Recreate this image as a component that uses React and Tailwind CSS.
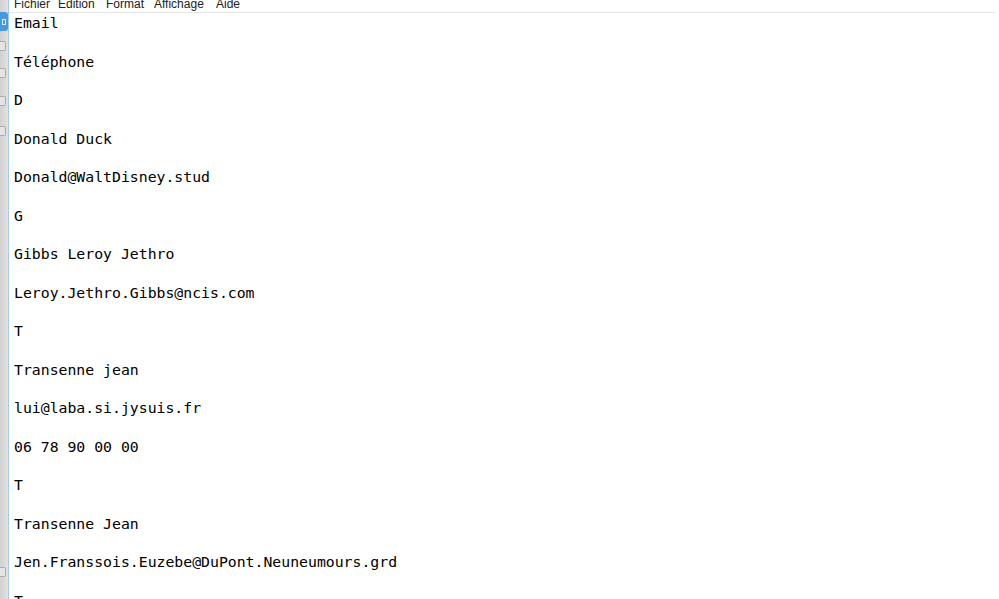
import React from "react";

const lines = [
  "Email",
  "Téléphone",
  "D",
  "Donald Duck",
  "Donald@WaltDisney.stud",
  "G",
  "Gibbs Leroy Jethro",
  "Leroy.Jethro.Gibbs@ncis.com",
  "T",
  "Transenne jean",
  "lui@laba.si.jysuis.fr",
  "06 78 90 00 00",
  "T",
  "Transenne Jean",
  "Jen.Franssois.Euzebe@DuPont.Neuneumours.grd",
  "T",
];

function SideIcon() {
  return (
    <div className="w-[6px] h-[10px] rounded-r-[2px] border border-l-0 border-[#ababab] bg-[#e4e4e4]" />
  );
}

export default function App() {
  return (
    <div className="w-[999px] h-[599px] overflow-hidden flex bg-white">
      <div className="w-[8px] h-full bg-gradient-to-r from-[#d0d0d0] to-[#e2e2e2] flex flex-col items-start">
        <div className="mt-[12px] w-[8px] h-[19px] rounded-r-[3px] bg-[#4b97dc] flex items-center justify-center">
          <div className="w-[4px] h-[6px] border border-white/80" />
        </div>
        <div className="mt-[10px]"><SideIcon /></div>
        <div className="mt-[17px]"><SideIcon /></div>
        <div className="mt-[18px]"><SideIcon /></div>
        <div className="mt-[20px]"><SideIcon /></div>
        <div className="mt-auto mb-[22px]"><SideIcon /></div>
      </div>
      <div className="w-px h-full bg-[#a7c9ea]" />
      <div className="flex-1 flex flex-col min-w-0">
        <div className="h-[13px] border-b border-[#e6e6e6] overflow-hidden shrink-0 mr-[3px]">
          <div
            className="mt-[-3px] pl-[5px] flex text-[12px] leading-[normal] text-[#222222]"
            style={{ fontFamily: '"Liberation Sans", Arial, sans-serif' }}
          >
            <span className="w-[44px]">Fichier</span>
            <span className="w-[48px]">Edition</span>
            <span className="w-[48px]">Format</span>
            <span className="w-[62px]">Affichage</span>
            <span>Aide</span>
          </div>
        </div>
        <div
          className="pl-[5px] text-[14.8px] leading-[19.25px] text-black whitespace-pre"
          style={{ fontFamily: '"DejaVu Sans Mono", "Liberation Mono", monospace' }}
        >
          {lines.join("\n\n")}
        </div>
      </div>
    </div>
  );
}
